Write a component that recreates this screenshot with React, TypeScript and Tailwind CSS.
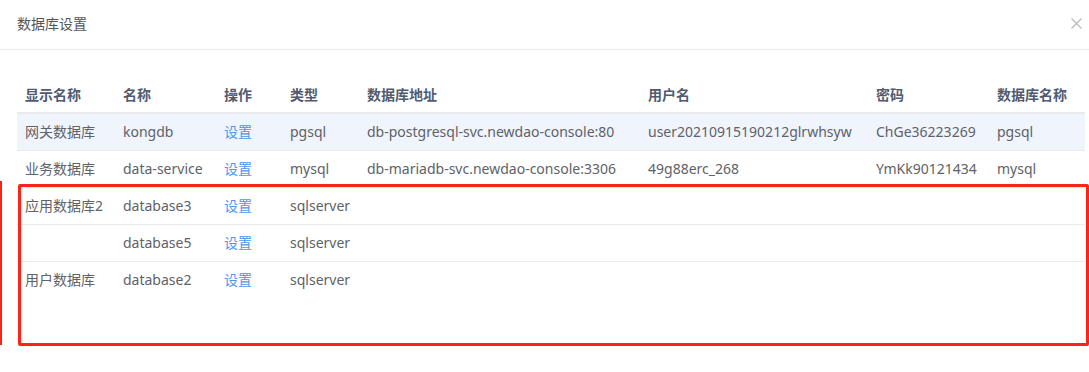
import React from "react";

type Row = { show: string; name: string; type: string; addr: string; user: string; pwd: string; db: string };

const rows: Row[] = [
  { show: "网关数据库", name: "kongdb", type: "pgsql", addr: "db-postgresql-svc.newdao-console:80", user: "user20210915190212glrwhsyw", pwd: "ChGe36223269", db: "pgsql" },
  { show: "业务数据库", name: "data-service", type: "mysql", addr: "db-mariadb-svc.newdao-console:3306", user: "49g88erc_268", pwd: "YmKk90121434", db: "mysql" },
  { show: "应用数据库2", name: "database3", type: "sqlserver", addr: "", user: "", pwd: "", db: "" },
  { show: "", name: "database5", type: "sqlserver", addr: "", user: "", pwd: "", db: "" },
  { show: "用户数据库", name: "database2", type: "sqlserver", addr: "", user: "", pwd: "", db: "" },
];

const widths = [98, 101, 66, 77, 281, 228, 121, 96];
const heads = ["显示名称", "名称", "操作", "类型", "数据库地址", "用户名", "密码", "数据库名称"];

export default function App() {
  return (
    <div
      className="relative w-[1089px] h-[372px] bg-white overflow-hidden"
      style={{ fontFamily: '"Noto Sans", "Noto Sans CJK SC", sans-serif' }}
    >
      <div className="h-[50px] flex items-center justify-between pl-[17px] pr-[7px] border-b border-[#e8eaec]">
        <span className="text-[14px] text-[#555] leading-none pb-[1px]">数据库设置</span>
        <svg width="11" height="11" viewBox="0 0 11 11" className="mr-[0px] mb-[3px]">
          <path d="M0.5 0.5 L10.5 10.5 M10.5 0.5 L0.5 10.5" stroke="#bdbdbd" strokeWidth="1.4" />
        </svg>
      </div>
      <div className="pt-[27px] pl-[17px]">
        <table className="table-fixed border-collapse w-[1068px] text-[14px]">
          <colgroup>
            {widths.map((w, i) => (
              <col key={i} style={{ width: w }} />
            ))}
          </colgroup>
          <thead>
            <tr className="h-[36px] border-b-2 border-[#e8eaec]">
              {heads.map((h) => (
                <th key={h} className="text-left font-bold pl-[8px] text-[#515a6e] whitespace-nowrap">
                  {h}
                </th>
              ))}
            </tr>
          </thead>
          <tbody>
            {rows.map((r, i) => (
              <tr
                key={i}
                className={
                  "h-[37px] " +
                  (i === 0 ? "bg-[#f0f4fd] " : "") +
                  (i < rows.length - 1 ? "border-b border-[#e8eaec]" : "")
                }
              >
                <td className="pl-[8px] text-[#606266] whitespace-nowrap">{r.show}</td>
                <td className="pl-[8px] text-[#606266] whitespace-nowrap">{r.name}</td>
                <td className="pl-[8px] text-[#4f95ee] whitespace-nowrap">设置</td>
                <td className="pl-[8px] text-[#606266] whitespace-nowrap">{r.type}</td>
                <td className="pl-[8px] text-[#606266] whitespace-nowrap">{r.addr}</td>
                <td className="pl-[8px] text-[#606266] whitespace-nowrap">{r.user}</td>
                <td className="pl-[8px] text-[#606266] whitespace-nowrap">{r.pwd}</td>
                <td className="pl-[8px] text-[#606266] whitespace-nowrap">{r.db}</td>
              </tr>
            ))}
          </tbody>
        </table>
      </div>
      <div className="absolute left-[18px] top-[184px] w-[1071px] h-[162px] border-[3px] border-[#fa2419] rounded-[2px]" />
      <div className="absolute left-0 top-[181px] w-[2px] h-[164px] bg-[#fa2419]" />
    </div>
  );
}
